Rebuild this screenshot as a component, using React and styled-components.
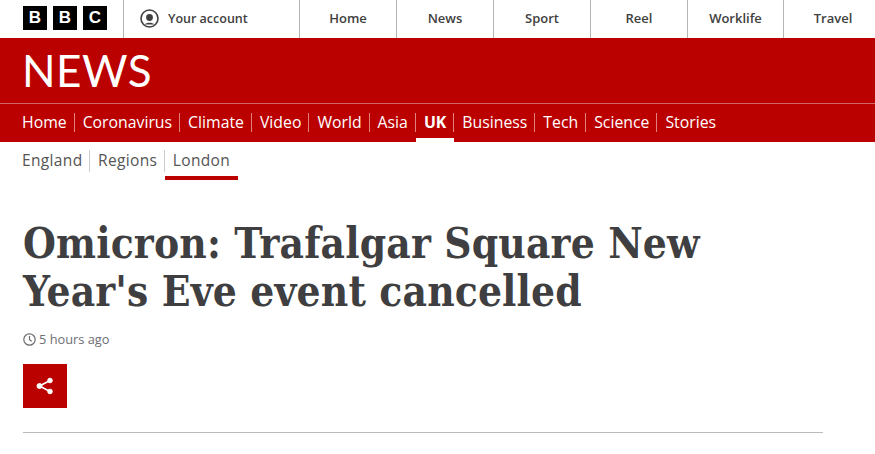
import React from "react";
import styled, { createGlobalStyle } from "styled-components";

const Global = createGlobalStyle`
  html, body { margin: 0; padding: 0; background: #fff; overflow: hidden; }
  body { font-family: "Open Sans", "Liberation Sans", sans-serif; }
`;
const Page = styled.div`width: 875px; height: 454px; overflow: hidden;`;
const TopBar = styled.header`display: flex; height: 38px; color: #404040;`;
const Logo = styled.div`flex: none; display: flex; gap: 6px; padding: 6px 16px 0 23px; width: 84px; border-right: 1px solid #b5b5b5;`;
const LogoBlock = styled.span`flex: none; width: 24px; height: 24px; background: #000; color: #fff; font: 700 17px/24px "Liberation Sans", sans-serif; text-align: center;`;
const Account = styled.div`flex: none; display: flex; align-items: center; gap: 9px; width: 176px; padding: 0 0 1px 16px; box-sizing: border-box; font-size: 12.5px; font-weight: 600; border-right: 1px solid #b5b5b5;`;
const TopLink = styled.a`flex: none; display: flex; align-items: center; justify-content: center; width: ${p => p.$w}px; padding-bottom: 2px; box-sizing: border-box; font-size: 13px; font-weight: 600; border-right: ${p => p.$last ? "none" : "1px solid #b5b5b5"};`;
const Red = styled.div`background: #bb0000; color: #fff;`;
const Masthead = styled.div`height: 65px; padding-left: 22px; font: 400 44px/65px "Lato", sans-serif; letter-spacing: 0.5px;`;
const MainNav = styled.nav`display: flex; height: 38px; padding-left: 14px; border-top: 1px solid #d56666; font-size: 15.8px;`;
const MainItem = styled.a`display: flex; align-items: center; padding: 0 8px 3px; position: relative; &:not(:last-child)::after { content: ""; position: absolute; right: 0; top: 9px; height: 19px; width: 1px; background: #e08080; } ${p => p.$active && `font-weight: 700; &::before { content: ""; position: absolute; left: 0; right: 0; bottom: 0; height: 4px; background: #fff; }`}`;
const SubNav = styled.nav`display: flex; height: 38px; padding-left: 14.25px; color: #555; font-size: 15.5px; letter-spacing: 0.35px;`;
const SubItem = styled.a`display: flex; align-items: center; position: relative; padding: 0 7.75px 3px; &:not(:last-child)::after { content: ""; position: absolute; right: 0; top: 8px; height: 22px; width: 1px; background: #ccc; } ${p => p.$active && `&::before { content: ""; position: absolute; left: 0; right: 0; bottom: 0; height: 4px; background: #bb0000; }`}`;
const Article = styled.main`width: 800px; margin-left: 23px; padding-top: 40px; color: #3f3f42;`;
const Title = styled.h1`margin: 0; font: 700 42px/48px "DejaVu Serif Condensed", "DejaVu Serif", serif; letter-spacing: 0.15px;`;
const Time = styled.div`display: flex; align-items: center; gap: 3px; margin-top: 14px; font-size: 12.8px; color: #6e6e73;`;
const Share = styled.button`display: flex; align-items: center; justify-content: center; width: 44px; height: 44px; margin-top: 16px; padding: 0; border: 0; background: #bb0000;`;
const Rule = styled.hr`margin: 24px 0 0; border: 0; border-top: 1px solid #bbb;`;

const top = [["Home", 97], ["News", 97], ["Sport", 97], ["Reel", 97], ["Worklife", 96], ["Travel", 98]];
const main = ["Home", "Coronavirus", "Climate", "Video", "World", "Asia", "UK", "Business", "Tech", "Science", "Stories"];
export default function App() {
  return (
    <Page>
      <Global />
      <TopBar>
        <Logo>{["B", "B", "C"].map((l, i) => <LogoBlock key={i}>{l}</LogoBlock>)}</Logo>
        <Account>
          <svg width="19" height="19" viewBox="0 0 19 19" fill="none" stroke="#404040" strokeWidth="1.6"><circle cx="9.5" cy="9.5" r="8.5" /><circle cx="9.5" cy="8.5" r="3.4" fill="#404040" stroke="none" /><path d="M4.5 15.5c2-2.2 8-2.2 10 0" fill="#404040" stroke="none" /></svg>
          Your account
        </Account>
        {top.map(([t, w], i) => <TopLink key={t} $w={w} $last={i === 5}>{t}</TopLink>)}
      </TopBar>
      <Red>
        <Masthead>NEWS</Masthead>
        <MainNav>{main.map(m => <MainItem key={m} $active={m === "UK"}>{m}</MainItem>)}</MainNav>
      </Red>
      <SubNav><SubItem>England</SubItem><SubItem>Regions</SubItem><SubItem $active>London</SubItem></SubNav>
      <Article>
        <Title>Omicron: Trafalgar Square New Year's Eve event cancelled</Title>
        <Time>
          <svg width="13" height="13" viewBox="0 0 13 13" fill="none" stroke="#6e6e73" strokeWidth="1.2"><circle cx="6.5" cy="6.5" r="5.7" /><path d="M6.5 3v3.7l2.2 1.6" /></svg>
          5 hours ago
        </Time>
        <Share aria-label="Share">
          <svg width="18" height="18" viewBox="0 0 18 18" fill="#fff" stroke="#fff"><circle cx="14" cy="3.5" r="2.3" /><circle cx="14" cy="14.5" r="2.3" /><circle cx="3.5" cy="9" r="2.5" /><path d="M14 3.5 3.5 9 14 14.5" fill="none" strokeWidth="1.6" /></svg>
        </Share>
        <Rule />
      </Article>
    </Page>
  );
}
